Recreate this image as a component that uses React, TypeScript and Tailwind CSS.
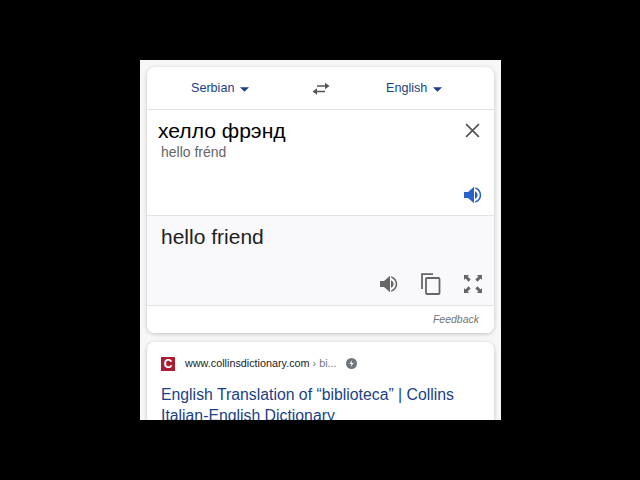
import React from "react";

const Speaker = ({ color }: { color: string }) => (
  <svg width="20" height="20" viewBox="0 0 20 20" fill="none">
    <path d="M1 7h4l6-5.2v16.4L5 13H1z" fill={color} />
    <path d="M12 6.2c1.6.7 2.6 2.1 2.6 3.8s-1 3.1-2.6 3.8z" fill={color} />
    <path d="M12.2 2.2c3.5.9 6 4 6 7.8s-2.5 6.900-6 7.8v-1.500c2.700-.9 4.500-3.400 4.500-6.300s-1.800-5.400-4.500-6.300z" fill={color} />
  </svg>
);

const Caret = () => (
  <svg width="9" height="5" viewBox="0 0 10 5" className="ml-[6px] mt-[3px]">
    <path d="M0 0h10L5 5z" fill="#1a3f87" />
  </svg>
);

export default function App() {
  return (
    <div className="w-[640px] h-[480px] bg-black pt-[60px] pl-[140px] font-['Liberation_Sans',Arial,sans-serif]">
      <div className="w-[361px] h-[360px] overflow-hidden bg-[#f7f7f7] px-[7px] pt-[7px]">
        <div className="h-[266px] rounded-[8px] bg-white shadow-[0_1px_4px_rgba(0,0,0,0.22)] overflow-hidden flex flex-col">
          <div className="h-[43px] flex items-center border-b border-[#e3e3e5] shrink-0">
            <div className="flex items-center pl-[44px] pt-[1px] w-[160px] text-[12.6px] text-[#1a3f87]">
              Serbian
              <Caret />
            </div>
            <svg width="20" height="16" viewBox="0 0 20 16" className="ml-[4px] mt-[1px]">
              <path d="M6 4.200h8V1.800L18.500 5 14 8.200V5.800H6z" fill="#555" />
              <path d="M14 9.700H6V7.300L1.500 10.500 6 13.700v-2.400h8z" fill="#555" />
            </svg>
            <div className="flex items-center ml-[55px] pt-[1px] text-[12.6px] text-[#1a3f87]">
              English
              <Caret />
            </div>
          </div>
          <div className="h-[106px] shrink-0 border-b border-[#e3e3e5] flex flex-col relative">
            <div className="flex justify-between pl-[11px] pr-[14px] pt-[8px]">
              <div className="text-[21.1px] leading-[26px] text-black">хелло фрэнд</div>
              <svg width="15" height="15" viewBox="0 0 14 14" className="mt-[5px]">
                <path d="M1 1l12 12M13 1L1 13" stroke="#555" strokeWidth="1.6" />
              </svg>
            </div>
            <div className="pl-[14px] text-[14px] leading-[16px] text-[#666]">hello frénd</div>
            <div className="mt-auto flex justify-end pr-[11px] pb-[10px]">
              <Speaker color="#2a63c8" />
            </div>
          </div>
          <div className="flex-1 bg-[#f9f9fb] flex flex-col">
            <div className="pl-[14px] pt-[8px] text-[21px] leading-[26px] text-[#222]">hello friend</div>
            <div className="mt-auto flex items-center justify-end pr-[11px] pb-[10px] gap-[22px]">
              <Speaker color="#666" />
              <svg width="20" height="22" viewBox="0 0 20 22" fill="none">
                <path d="M1 16V1.200h11" stroke="#666" strokeWidth="1.800" />
                <rect x="5" y="5" width="13.500" height="16" rx="1" stroke="#666" strokeWidth="1.800" />
              </svg>
              <svg width="20" height="20" viewBox="0 0 20 20" fill="#666">
                <path d="M1 1h5L4.600 2.400 7.700 5.500 5.500 7.700 2.400 4.600 1 6zM19 1v5l-1.400-1.400-3.100 3.100-2.200-2.200 3.100-3.100L14 1zM1 19v-5l1.400 1.400 3.100-3.100 2.200 2.200-3.100 3.100L6 19zM19 19h-5l1.400-1.400-3.100-3.100 2.200-2.200 3.100 3.100L19 14z" />
              </svg>
            </div>
            <div className="h-[28px] border-t border-[#e3e3e5] bg-white flex items-center justify-end pr-[15px] text-[10.500px] italic text-[#70757a]">
              Feedback
            </div>
          </div>
        </div>
        <div className="mt-[9px] h-[90px] rounded-t-[8px] bg-white shadow-[0_1px_4px_rgba(0,0,0,0.22)] px-[14px] pt-[14px]">
          <div className="flex items-center h-[15px]">
            <div className="w-[14px] h-[14px] bg-[#a81f33] text-white text-[12px] leading-[14px] text-center font-bold">C</div>
            <span className="ml-[10px] text-[10.800px] text-[#222]">www.collinsdictionary.com</span>
            <span className="ml-[3px] text-[10.800px] text-[#70757a]">› bi...</span>
            <svg width="11" height="11" viewBox="0 0 11 11" className="ml-[9px]">
              <circle cx="5.500" cy="5.500" r="5.500" fill="#70757a" />
              <path d="M6.200 2L3.400 6h2l-.6 3 2.800-4h-2z" fill="#fff" />
            </svg>
          </div>
          <div className="mt-[13px] text-[15.800px] leading-[21px] text-[#1a3f87]">
            English Translation of “biblioteca” | Collins
            <br />
            Italian-English Dictionary
          </div>
        </div>
      </div>
    </div>
  );
}
